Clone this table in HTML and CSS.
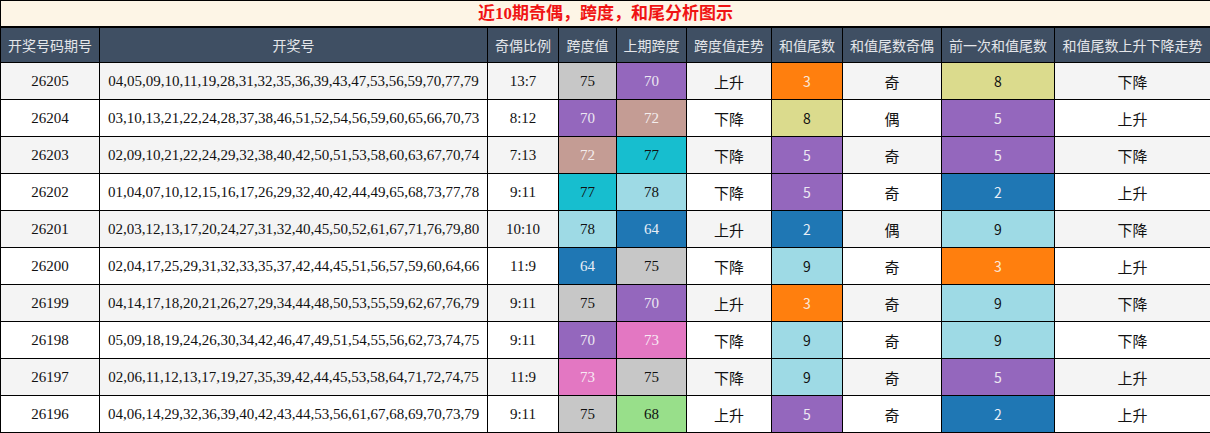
FILE: index.html
```html
<!DOCTYPE html>
<html lang="zh">
<head>
<meta charset="utf-8">
<title>近10期奇偶，跨度，和尾分析图示</title>
<link rel="stylesheet" href="styles.css">
</head>
<body>
<table class="chart">
  <colgroup>
    <col class="c1"><col class="c2"><col class="c3"><col class="c4"><col class="c5">
    <col class="c6"><col class="c7"><col class="c8"><col class="c9"><col class="c10">
  </colgroup>
  <thead>
    <tr class="title-row"><th colspan="10" class="title">近10期奇偶，跨度，和尾分析图示</th></tr>
    <tr class="head-row">
      <th>开奖号码期号</th><th>开奖号</th><th>奇偶比例</th><th>跨度值</th><th>上期跨度</th>
      <th>跨度值走势</th><th>和值尾数</th><th>和值尾数奇偶</th><th>前一次和值尾数</th><th>和值尾数上升下降走势</th>
    </tr>
  </thead>
  <tbody>
    <tr class="alt"><td class="num">26205</td><td class="num">04,05,09,10,11,19,28,31,32,35,36,39,43,47,53,56,59,70,77,79</td><td class="num">13:7</td><td class="num gray">75</td><td class="num purple">70</td><td class="cn">上升</td><td class="sn orange">3</td><td class="cn">奇</td><td class="sn olive">8</td><td class="cn">下降</td></tr>
    <tr><td class="num">26204</td><td class="num">03,10,13,21,22,24,28,37,38,46,51,52,54,56,59,60,65,66,70,73</td><td class="num">8:12</td><td class="num purple">70</td><td class="num brown">72</td><td class="cn">下降</td><td class="sn olive">8</td><td class="cn">偶</td><td class="sn purple">5</td><td class="cn">上升</td></tr>
    <tr class="alt"><td class="num">26203</td><td class="num">02,09,10,21,22,24,29,32,38,40,42,50,51,53,58,60,63,67,70,74</td><td class="num">7:13</td><td class="num brown">72</td><td class="num cyan">77</td><td class="cn">下降</td><td class="sn purple">5</td><td class="cn">奇</td><td class="sn purple">5</td><td class="cn">下降</td></tr>
    <tr><td class="num">26202</td><td class="num">01,04,07,10,12,15,16,17,26,29,32,40,42,44,49,65,68,73,77,78</td><td class="num">9:11</td><td class="num cyan">77</td><td class="num lcyan">78</td><td class="cn">下降</td><td class="sn purple">5</td><td class="cn">奇</td><td class="sn blue">2</td><td class="cn">上升</td></tr>
    <tr class="alt"><td class="num">26201</td><td class="num">02,03,12,13,17,20,24,27,31,32,40,45,50,52,61,67,71,76,79,80</td><td class="num">10:10</td><td class="num lcyan">78</td><td class="num blue">64</td><td class="cn">上升</td><td class="sn blue">2</td><td class="cn">偶</td><td class="sn lcyan">9</td><td class="cn">下降</td></tr>
    <tr><td class="num">26200</td><td class="num">02,04,17,25,29,31,32,33,35,37,42,44,45,51,56,57,59,60,64,66</td><td class="num">11:9</td><td class="num blue">64</td><td class="num gray">75</td><td class="cn">下降</td><td class="sn lcyan">9</td><td class="cn">奇</td><td class="sn orange">3</td><td class="cn">上升</td></tr>
    <tr class="alt"><td class="num">26199</td><td class="num">04,14,17,18,20,21,26,27,29,34,44,48,50,53,55,59,62,67,76,79</td><td class="num">9:11</td><td class="num gray">75</td><td class="num purple">70</td><td class="cn">上升</td><td class="sn orange">3</td><td class="cn">奇</td><td class="sn lcyan">9</td><td class="cn">下降</td></tr>
    <tr><td class="num">26198</td><td class="num">05,09,18,19,24,26,30,34,42,46,47,49,51,54,55,56,62,73,74,75</td><td class="num">9:11</td><td class="num purple">70</td><td class="num pink">73</td><td class="cn">下降</td><td class="sn lcyan">9</td><td class="cn">奇</td><td class="sn lcyan">9</td><td class="cn">下降</td></tr>
    <tr class="alt"><td class="num">26197</td><td class="num">02,06,11,12,13,17,19,27,35,39,42,44,45,53,58,64,71,72,74,75</td><td class="num">11:9</td><td class="num pink">73</td><td class="num gray">75</td><td class="cn">下降</td><td class="sn lcyan">9</td><td class="cn">奇</td><td class="sn purple">5</td><td class="cn">上升</td></tr>
    <tr><td class="num">26196</td><td class="num">04,06,14,29,32,36,39,40,42,43,44,53,56,61,67,68,69,70,73,79</td><td class="num">9:11</td><td class="num gray">75</td><td class="num green">68</td><td class="cn">上升</td><td class="sn purple">5</td><td class="cn">奇</td><td class="sn blue">2</td><td class="cn">上升</td></tr>
  </tbody>
</table>
</body>
</html>
```
FILE: styles.css
```css
html, body {
  margin: 0;
  padding: 0;
  background: #ffffff;
}

.chart {
  width: 1210px;
  border-collapse: collapse;
  table-layout: fixed;
}

.c1 { width: 99px; }
.c2 { width: 388px; }
.c3 { width: 71px; }
.c4 { width: 58px; }
.c5 { width: 70px; }
.c6 { width: 85px; }
.c7 { width: 71px; }
.c8 { width: 99px; }
.c9 { width: 113px; }
.c10 { width: 156px; }

.chart th,
.chart td {
  border: 1px solid #000;
  padding: 0;
  text-align: center;
  vertical-align: middle;
}

.title-row th {
  height: 25px;
  background: #fdf5e6;
  border-bottom: 2px solid #000;
  color: #f01414;
  font-family: "Liberation Serif", "Noto Sans CJK SC", serif;
  font-weight: bold;
  font-size: 17px;
  line-height: 25px;
}

.head-row th {
  height: 34px;
  background: #3f4f63;
  color: #e4e6ea;
  font-family: "Noto Sans CJK SC", sans-serif;
  font-weight: normal;
  font-size: 14px;
}

.chart tbody td {
  height: 36px;
  background: #ffffff;
  color: #111;
}

.chart tbody tr.alt td {
  background: #f4f4f4;
}

.num {
  font-family: "Liberation Serif", serif;
  font-size: 15px;
}

.cn {
  font-family: "Noto Sans CJK SC", sans-serif;
  font-size: 15px;
}

.sn {
  font-family: "Noto Sans CJK SC", "Noto Sans", sans-serif;
  font-size: 14px;
}

.chart tbody tr td.gray { background: #c7c7c7; color: #111; }
.chart tbody tr td.purple { background: #9467bd; color: #ece8f2; }
.chart tbody tr td.brown { background: #c49c94; color: #f4eeee; }
.chart tbody tr td.cyan { background: #17becf; color: #111; }
.chart tbody tr td.lcyan { background: #9edae5; color: #111; }
.chart tbody tr td.blue { background: #1f77b4; color: #e8eef6; }
.chart tbody tr td.orange { background: #ff7f0e; color: #fbe8d8; }
.chart tbody tr td.olive { background: #dbdb8d; color: #111; }
.chart tbody tr td.pink { background: #e377c2; color: #f8eaf4; }
.chart tbody tr td.green { background: #98df8a; color: #111; }
```
